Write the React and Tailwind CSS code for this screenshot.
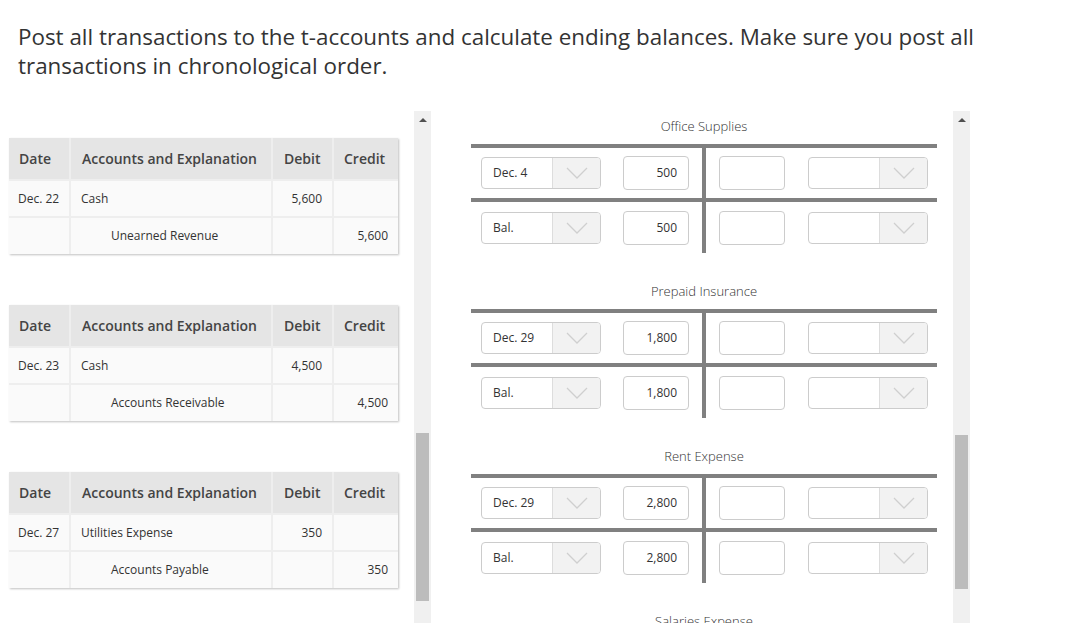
import React from "react";

const entries = [
  { date: "Dec. 22", debitAcct: "Cash", creditAcct: "Unearned Revenue", amount: "5,600" },
  { date: "Dec. 23", debitAcct: "Cash", creditAcct: "Accounts Receivable", amount: "4,500" },
  { date: "Dec. 27", debitAcct: "Utilities Expense", creditAcct: "Accounts Payable", amount: "350" },
];

const tAccounts = [
  { name: "Office Supplies", date: "Dec. 4", amount: "500", bal: "500" },
  { name: "Prepaid Insurance", date: "Dec. 29", amount: "1,800", bal: "1,800" },
  { name: "Rent Expense", date: "Dec. 29", amount: "2,800", bal: "2,800" },
  { name: "Salaries Expense", date: "", amount: "", bal: "" },
];

function Chevron() {
  return (
    <svg width="22" height="12" viewBox="0 0 22 12" fill="none">
      <polyline points="1,1 11,11 21,1" stroke="#cfcfcf" strokeWidth="1.3" />
    </svg>
  );
}

function Select({ value }) {
  return (
    <div className="flex h-[32px] w-[120px] overflow-hidden rounded-[4px] border border-[#cccccc] bg-white">
      <div className="flex flex-1 items-center pl-[11px] text-[12px] text-[#333]">{value}</div>
      <div className="flex w-[48px] items-center justify-center border-l border-[#dddddd] bg-[#f2f2f2]">
        <Chevron />
      </div>
    </div>
  );
}

function Amount({ value }) {
  return (
    <div className="flex h-[34px] w-[66px] items-center justify-end rounded-[4px] border border-[#cccccc] bg-white pr-[11px] text-[12px] text-[#333]">
      {value}
    </div>
  );
}

function TRow({ date, amount, h }) {
  return (
    <>
      <div className={"flex items-center gap-[22px] pl-[10px] " + h}>
        <Select value={date} />
        <Amount value={amount} />
      </div>
      <div className="bg-[#808080]" />
      <div className={"flex items-center justify-end gap-[23px] pr-[9px] " + h}>
        <Amount value="" />
        <Select value="" />
      </div>
    </>
  );
}

function TAccount({ acct }) {
  return (
    <div className="mb-[29px] w-[466px]">
      <div className="mb-[9px] text-center text-[13px] font-light leading-[18px] text-[#333]">{acct.name}</div>
      <div className="grid grid-cols-[231px_4px_231px]">
        <div className="col-span-3 h-[4px] bg-[#808080]" />
        <TRow date={acct.date} amount={acct.amount} h="h-[50px]" />
        <div className="col-span-3 h-[4px] bg-[#808080]" />
        <TRow date={acct.bal ? "Bal." : ""} amount={acct.bal} h="h-[51px]" />
      </div>
    </div>
  );
}

function Journal({ e }) {
  return (
    <div className="mb-[51px] grid w-[389px] grid-cols-[60px_200px_59px_64px] gap-[2px] bg-[#eeeeee] shadow-[1px_1px_2px_rgba(0,0,0,0.25)]">
      <div className="flex h-[41px] items-center bg-[#e5e5e5] pl-[10px] text-[14px] font-semibold text-[#444]">Date</div>
      <div className="flex h-[41px] items-center bg-[#e5e5e5] pl-[11px] text-[14px] font-semibold text-[#444]">Accounts and Explanation</div>
      <div className="flex h-[41px] items-center bg-[#e5e5e5] pl-[11px] text-[14px] font-semibold text-[#444]">Debit</div>
      <div className="flex h-[41px] items-center bg-[#e5e5e5] pl-[10px] text-[14px] font-semibold text-[#444]">Credit</div>

      <div className="flex h-[35px] items-center bg-[#fafafa] pl-[9px] text-[12px] text-[#333]">{e.date}</div>
      <div className="flex h-[35px] items-center bg-[#fafafa] pl-[10px] text-[12px] text-[#333]">{e.debitAcct}</div>
      <div className="flex h-[35px] items-center justify-end bg-[#fafafa] pr-[10px] text-[12px] text-[#333]">{e.amount}</div>
      <div className="h-[35px] bg-[#fafafa]" />

      <div className="h-[36px] bg-[#fafafa]" />
      <div className="flex h-[36px] items-center bg-[#fafafa] pl-[40px] text-[12px] text-[#333]">{e.creditAcct}</div>
      <div className="h-[36px] bg-[#fafafa]" />
      <div className="flex h-[36px] items-center justify-end bg-[#fafafa] pr-[10px] text-[12px] text-[#333]">{e.amount}</div>
    </div>
  );
}

function ScrollBar({ thumbClass }) {
  return (
    <div className="flex h-full w-[17px] shrink-0 flex-col bg-[#f0f0f0]">
      <div className="flex h-[17px] items-center justify-center">
        <div className="h-0 w-0 border-x-[4px] border-b-[4px] border-x-transparent border-b-[#505050]" />
      </div>
      <div className={"mx-[2px] w-[13px] bg-[#bcbcbc] " + thumbClass} />
    </div>
  );
}

export default function App() {
  return (
    <div className="h-[623px] w-[1076px] overflow-hidden bg-white font-['Open_Sans',sans-serif]">
      <h1 className="ml-[18px] mt-[22px] w-[1010px] text-[22.4px] leading-[29px] text-[#333]">
        Post all transactions to the t-accounts and calculate ending balances. Make sure you post all transactions in chronological order.
      </h1>

      <div className="mt-[31px] flex h-[512px]">
        <div className="h-full w-[414px] shrink-0 overflow-hidden pl-[9px] pt-[27px]">
          {entries.map((e) => (
            <Journal key={e.date} e={e} />
          ))}
        </div>
        <ScrollBar thumbClass="mt-[305px] h-[168px]" />

        <div className="h-full w-[522px] shrink-0 overflow-hidden pl-[40px] pt-[6px]">
          {tAccounts.map((a) => (
            <TAccount key={a.name} acct={a} />
          ))}
        </div>
        <ScrollBar thumbClass="mt-[307px] h-[154px]" />
      </div>
    </div>
  );
}
